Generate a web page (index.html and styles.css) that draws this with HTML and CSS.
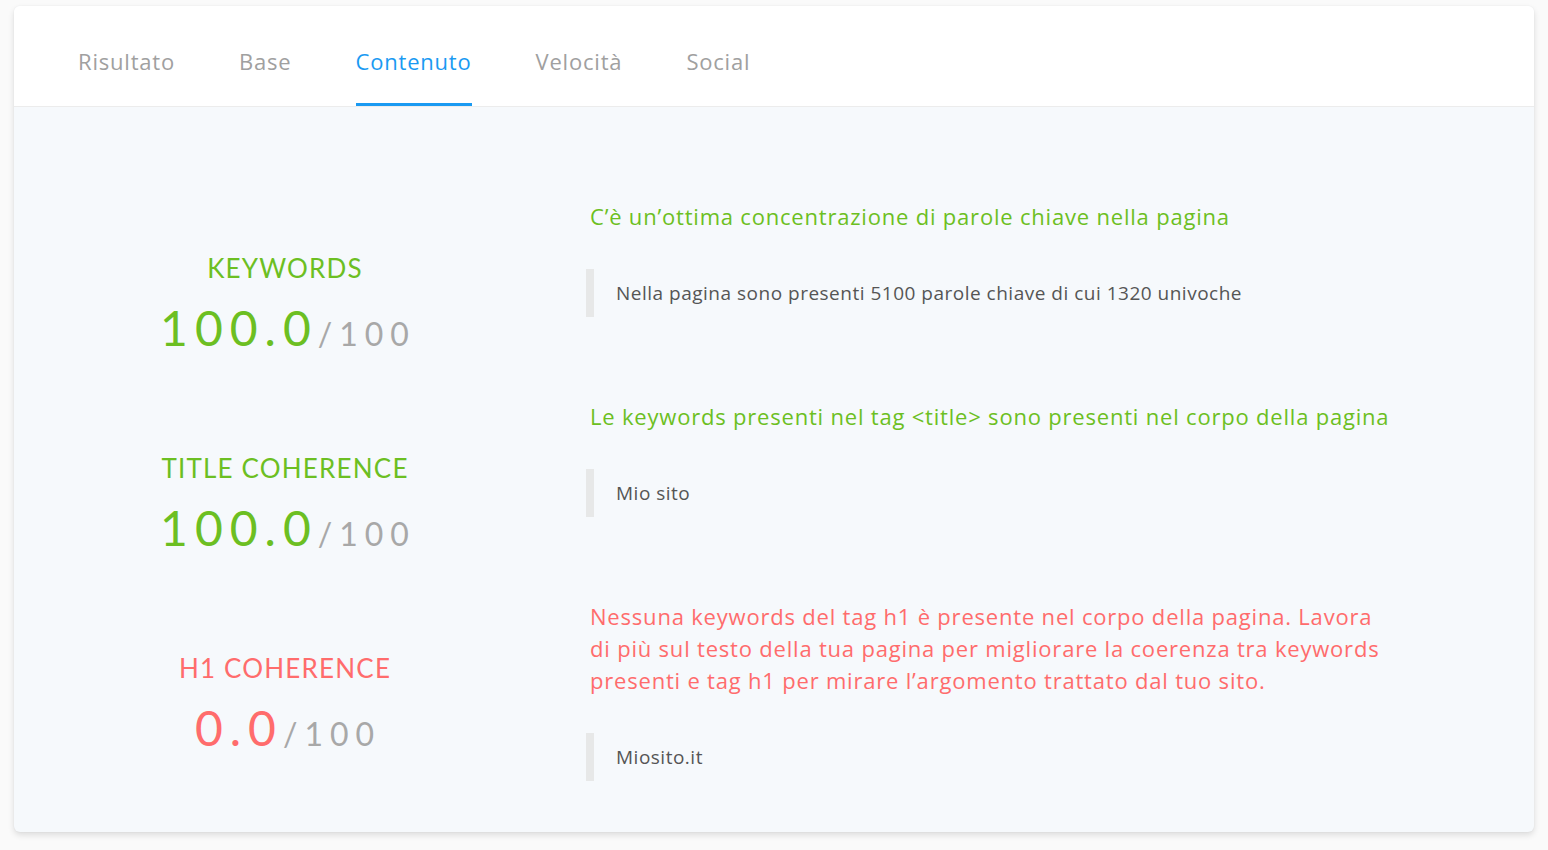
FILE: index.html
```html
<!DOCTYPE html>
<html lang="it">
<head>
    <meta charset="UTF-8">
    <meta name="viewport" content="width=device-width, initial-scale=1.0">
    <title>Analisi SEO - Contenuto</title>
    <link rel="stylesheet" href="styles.css">
</head>
<body>
    <div class="report-card">
        <nav class="tabs">
            <a class="tab" href="#">Risultato</a>
            <a class="tab" href="#">Base</a>
            <a class="tab active" href="#">Contenuto</a>
            <a class="tab" href="#">Velocità</a>
            <a class="tab" href="#">Social</a>
        </nav>

        <div class="report-body">
            <div class="metric good">
                <div class="metric-score">
                    <div class="metric-name">KEYWORDS</div>
                    <div class="score"><span class="value">100.0</span><span class="max">/100</span></div>
                </div>
                <div class="metric-detail">
                    <p class="message">C’è un’ottima concentrazione di parole chiave nella pagina</p>
                    <blockquote class="quote">Nella pagina sono presenti 5100 parole chiave di cui 1320 univoche</blockquote>
                </div>
            </div>

            <div class="metric good">
                <div class="metric-score">
                    <div class="metric-name">TITLE COHERENCE</div>
                    <div class="score"><span class="value">100.0</span><span class="max">/100</span></div>
                </div>
                <div class="metric-detail">
                    <p class="message">Le keywords presenti nel tag &lt;title&gt; sono presenti nel corpo della pagina</p>
                    <blockquote class="quote">Mio sito</blockquote>
                </div>
            </div>

            <div class="metric bad">
                <div class="metric-score">
                    <div class="metric-name">H1 COHERENCE</div>
                    <div class="score"><span class="value">0.0</span><span class="max">/100</span></div>
                </div>
                <div class="metric-detail">
                    <p class="message">Nessuna keywords del tag h1 è presente nel corpo della pagina. Lavora di più sul testo della tua pagina per migliorare la coerenza tra keywords presenti e tag h1 per mirare l’argomento trattato dal tuo sito.</p>
                    <blockquote class="quote">Miosito.it</blockquote>
                </div>
            </div>
        </div>
    </div>
</body>
</html>
```

FILE: styles.css
```css
body {
    margin: 0;
    padding: 6px 14px 20px;
    background-color: #fafafa;
    font-family: 'Open Sans', 'Liberation Sans', sans-serif;
}

.report-card {
    background-color: #f6f9fc;
    border-radius: 6px;
    box-shadow: 0 3px 6px rgba(0, 0, 0, 0.12), 0 0 2px rgba(0, 0, 0, 0.06);
    overflow: hidden;
}

/* tabs */
.tabs {
    display: flex;
    gap: 64px;
    padding-left: 64px;
    background-color: #fff;
    border-bottom: 1px solid #ececec;
}

.tab {
    display: block;
    padding: 39px 0 26px;
    line-height: 32px;
    font-size: 22px;
    letter-spacing: 0.8px;
    color: #a0a0a0;
    text-decoration: none;
    border-bottom: 3px solid transparent;
}

.tab.active {
    color: #1a9af2;
    border-bottom-color: #1a9af2;
}

/* content */
.report-body {
    padding: 93px 0 51px;
}

.metric {
    display: grid;
    grid-template-columns: 542px 1fr;
    column-gap: 30px;
    margin-bottom: 48px;
}

.metric:last-child {
    margin-bottom: 0;
}

.metric-score {
    padding-top: 52px;
    text-align: center;
    font-family: 'Lato', 'Liberation Sans', sans-serif;
}

.metric-name {
    font-size: 26px;
    line-height: 32px;
    letter-spacing: 1.2px;
}

.score {
    display: flex;
    justify-content: center;
    align-items: baseline;
    margin: 20px 0 0 6px;
}

.score span {
    line-height: 1;
}

.score .value {
    font-size: 48px;
    letter-spacing: 7px;
}

.score .max {
    font-size: 32px;
    letter-spacing: 7px;
    color: #a8a8a8;
}

.good .metric-name,
.good .value,
.good .message {
    color: #6cbf22;
}

.bad .metric-name,
.bad .value,
.bad .message {
    color: #ff6c6c;
}

.metric-detail {
    max-width: 806px;
}

.message {
    margin: 0 0 37px 4px;
    font-size: 22px;
    line-height: 32px;
    letter-spacing: 0.8px;
}

.quote {
    margin: 0;
    padding: 12px 0 12px 22px;
    border-left: 8px solid #e7e8e8;
    font-size: 19px;
    line-height: 24px;
    letter-spacing: 0.5px;
    color: #555;
}
```
